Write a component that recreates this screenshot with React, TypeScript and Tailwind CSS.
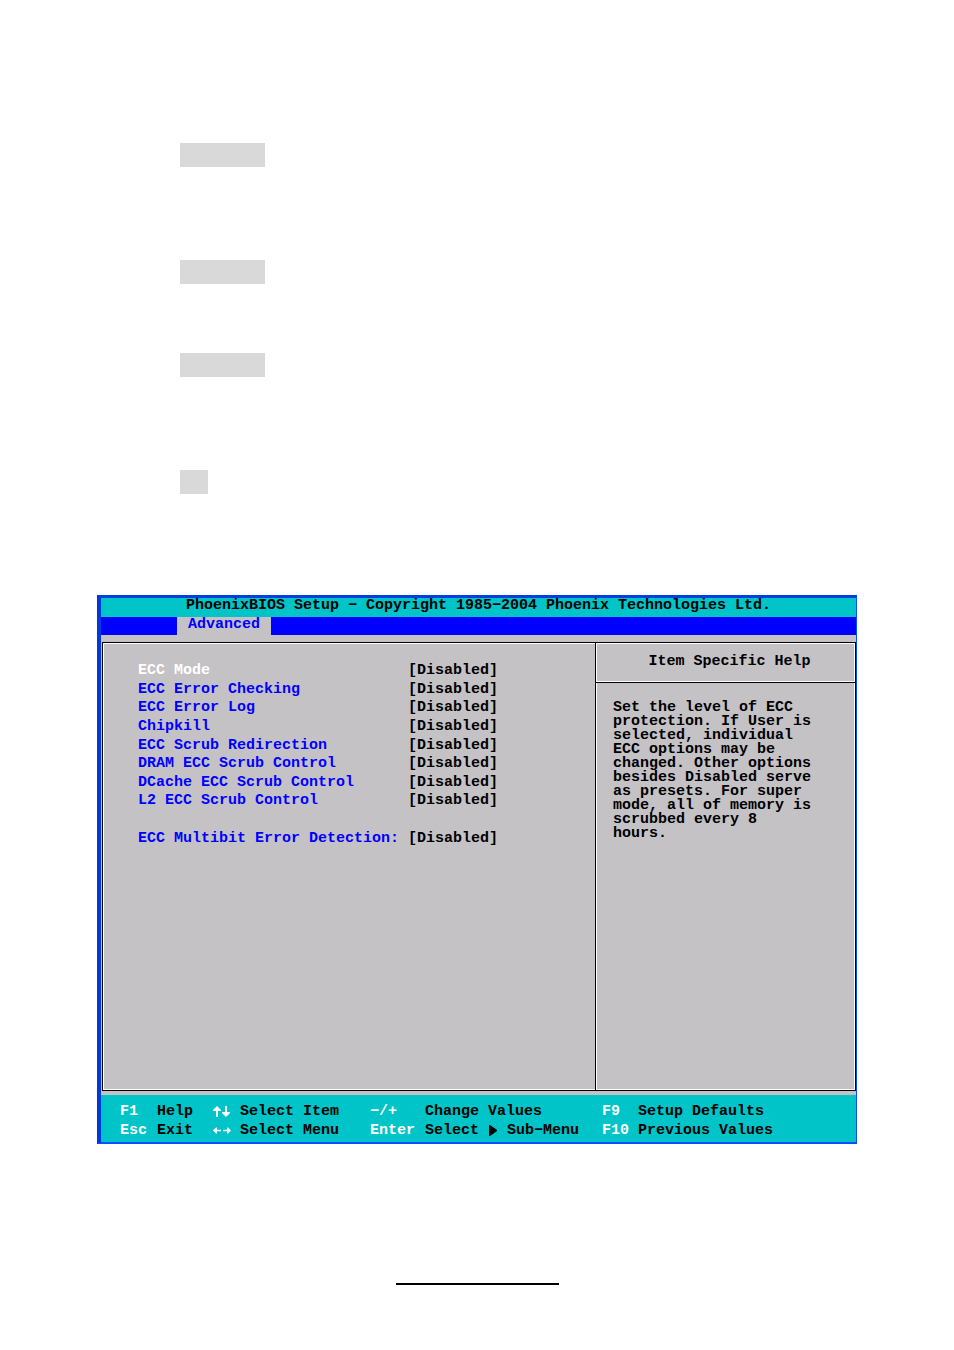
import * as React from 'react';

interface Setting {
  id: string,
  label: string,
}

const settings: Setting[] = [
  {id: "ecc-mode", label: "ECC Mode"},
  {id: "ecc-check", label: "ECC Error Checking"},
  {id: "ecc-log", label: "ECC Error Log"},
  {id: "chipkill", label: "Chipkill"},
  {id: "ecc-redirect", label: "ECC Scrub Redirection"},
  {id: "dram-scrub", label: "DRAM ECC Scrub Control"},
  {id: "dcache-scrub", label: "DCache ECC Scrub Control"},
  {id: "l2-scrub", label: "L2 ECC Scrub Control"},
]

const multibit: Setting = {id: "ecc-multibit", label: "ECC Multibit Error Detection:"}

export default function App() {
  return (
    <main className="bg-white pt-[143px] pb-[65px]">
      <ManualMarks/>
      <BiosScreen/>
      <hr className="mx-auto mt-[139px] w-[163px] border-0 border-t-2 border-black"/>
    </main>
  )
}

// Shaded blocks above the setup screen
function ManualMarks() {
  return (
    <div className="ml-[180px]">
      <div className="h-6 w-[85px] bg-[#d9d9d9]"/>
      <div className="mt-[93px] h-6 w-[85px] bg-[#d9d9d9]"/>
      <div className="mt-[69px] h-6 w-[85px] bg-[#d9d9d9]"/>
      <div className="mt-[93px] h-6 w-7 bg-[#d9d9d9]"/>
    </div>
  )
}

function BiosScreen() {
  return (
    <section className="mx-[97px] mt-[101px] border-t-[3px] border-r border-b-2 border-l-4 border-t-[#0040e0] border-r-[#0050ff] border-b-[#0050ff] border-l-[#0038e0] bg-[#c5c2c5] font-['Liberation_Mono','DejaVu_Sans_Mono',monospace] text-[15px] font-bold text-black">
      <h1 className="bg-[#00c4c7] pb-1 text-center leading-[15px]">
        PhoenixBIOS Setup − Copyright 1985−2004 Phoenix Technologies Ltd.
      </h1>
      <nav className="flex h-[18px] bg-[#0000ff] pl-[76px]">
        <button type="button" className="w-[94px] bg-[#c5c2c5] pb-[2px] text-center leading-4 text-[#0000ff]">Advanced</button>
      </nav>
      <div className="pt-[7px] pb-1 pl-px">
        <div className="flex min-h-[449px] border border-black">
          <SettingsPanel/>
          <HelpPanel/>
        </div>
      </div>
      <KeyBar/>
    </section>
  )
}

function SettingsPanel() {
  return (
    <form className="min-w-0 flex-1 border-t border-b border-l border-white pt-[18px] pl-[34px]">
      <div className="grid h-[186px] grid-rows-10">
        {settings.map((setting, i) => (
          <SettingRow key={setting.id} setting={setting} active={i === 0}/>
        ))}
        <div/>
        <SettingRow setting={multibit} active={false}/>
      </div>
    </form>
  )
}

interface SettingRowProps {
  setting: Setting,
  active: boolean,
}

function SettingRow(p: SettingRowProps) {
  return (
    <div className="flex items-center leading-[18px]">
      <label htmlFor={p.setting.id} className={p.active ? "w-[270px] text-white" : "w-[270px] text-[#0000ff]"}>
        {p.setting.label}
      </label>
      <select id={p.setting.id} className="appearance-none border-0 bg-transparent p-0 leading-[18px]">
        <option>[Disabled]</option>
        <option>[Enabled]</option>
      </select>
    </div>
  )
}

function HelpPanel() {
  return (
    <aside className="flex w-[260px] flex-col border-l border-black">
      <h2 className="h-[39px] border border-white pl-2 text-center leading-[35px]">Item Specific Help</h2>
      <div className="flex-1 border-t border-black">
        <div className="h-full border-x border-b border-white pt-[18px] pl-4">
          <p className="max-w-[204px] leading-[14px]">
            Set the level of ECC protection. If User is selected, individual ECC options
            may be changed. Other options besides Disabled serve as presets. For super
            mode, all of memory is scrubbed every 8 hours.
          </p>
        </div>
      </div>
    </aside>
  )
}

function KeyBar() {
  return (
    <footer className="grid grid-cols-[37px_56px_27px_130px_55px_177px_36px_1fr] items-center bg-[#00c4c7] pt-[7px] pb-[2px] pl-[19px] leading-[19px] whitespace-nowrap">
      <kbd className="font-[inherit] text-white">F1</kbd>
      <span>Help</span>
      <UpDownIcon/>
      <span>Select Item</span>
      <kbd className="font-[inherit] text-white">−/+</kbd>
      <span>Change Values</span>
      <kbd className="font-[inherit] text-white">F9</kbd>
      <span>Setup Defaults</span>

      <kbd className="font-[inherit] text-white">Esc</kbd>
      <span>Exit</span>
      <LeftRightIcon/>
      <span>Select Menu</span>
      <kbd className="font-[inherit] text-white">Enter</kbd>
      <span className="flex items-center gap-[10px]">Select <SubMenuIcon/> Sub−Menu</span>
      <kbd className="font-[inherit] text-white">F10</kbd>
      <span>Previous Values</span>
    </footer>
  )
}

function UpDownIcon() {
  return (
    <svg width="18" height="12" viewBox="0 0 18 12" fill="white" aria-label="Up and down">
      <path d="M4 0l4 4v1H5v6H3V5H0V4zM12 0h2v6h3v1l-4 4l-4-4V6h3z"/>
    </svg>
  )
}

function LeftRightIcon() {
  return (
    <svg width="18" height="12" viewBox="0 0 18 12" fill="white" aria-label="Left and right">
      <path d="M0 5.500L3 2.500h1v2.300h4v1.500H4v2.200H3zM18 5.500L15 2.500h-1v2.300h-4v1.500h4v2.200h1z"/>
    </svg>
  )
}

function SubMenuIcon() {
  return (
    <svg width="8" height="12" viewBox="0 0 8 12" aria-hidden="true">
      <path d="M0 0h1l7 5v1l-7 5H0z"/>
    </svg>
  )
}
